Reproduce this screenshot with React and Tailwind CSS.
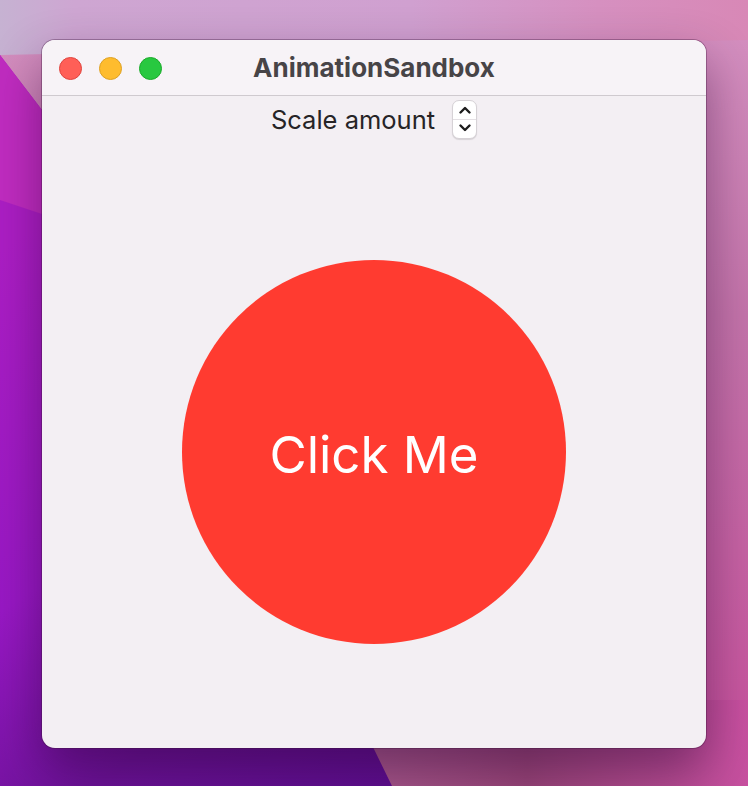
import React from 'react';

const Wallpaper = () => (
  <svg className="absolute inset-0" width="748" height="786" viewBox="0 0 748 786">
    <defs>
      <linearGradient id="pink" x1="0" y1="0" x2="0" y2="786" gradientUnits="userSpaceOnUse">
        <stop offset="0" stopColor="#d692c2" />
        <stop offset="0.4" stopColor="#c474aa" />
        <stop offset="1" stopColor="#c8509c" />
      </linearGradient>
      <linearGradient id="top" x1="0" y1="0" x2="748" y2="0" gradientUnits="userSpaceOnUse">
        <stop offset="0" stopColor="#c6b2d2" />
        <stop offset="0.1" stopColor="#cea6d2" />
        <stop offset="0.55" stopColor="#d0a0d0" />
        <stop offset="0.8" stopColor="#d690c0" />
        <stop offset="1" stopColor="#d888b6" />
      </linearGradient>
      <linearGradient id="purple" x1="0" y1="250" x2="380" y2="786" gradientUnits="userSpaceOnUse">
        <stop offset="0" stopColor="#ac1ec4" />
        <stop offset="0.45" stopColor="#9818c4" />
        <stop offset="0.75" stopColor="#6c1298" />
        <stop offset="1" stopColor="#5e0e90" />
      </linearGradient>
      <linearGradient id="mauve" x1="380" y1="0" x2="748" y2="0" gradientUnits="userSpaceOnUse">
        <stop offset="0" stopColor="#a8588a" />
        <stop offset="0.4" stopColor="#9a4678" />
        <stop offset="1" stopColor="#c850a0" />
      </linearGradient>
    </defs>
    <rect width="748" height="786" fill="url(#pink)" />
    <rect x="372" y="700" width="376" height="86" fill="url(#mauve)" />
    <polygon points="0,55 42,110 200,320 372,745 392,786 0,786" fill="url(#purple)" />
    <polygon points="0,55 42,110 150,250 0,200" fill="#c02cc0" />
    <polygon points="0,0 748,0 748,40 0,55" fill="url(#top)" />
  </svg>
);

const Stepper = () => (
  <div className="flex h-[39px] w-[25px] flex-col rounded-[7px] border border-[#d6d2d6] bg-white shadow-[0_1px_1px_rgba(0,0,0,0.12)]">
    <div className="flex flex-1 items-center justify-center border-b border-[#e4e0e4] pt-[1px]">
      <svg width="14" height="10" viewBox="0 0 14 10" fill="none">
        <path d="M2.5 7.5 L7 3 L11.5 7.5" stroke="#1c1c1c" strokeWidth="2.4" strokeLinecap="round" strokeLinejoin="round" />
      </svg>
    </div>
    <div className="flex flex-1 items-center justify-center pb-[1px]">
      <svg width="14" height="10" viewBox="0 0 14 10" fill="none">
        <path d="M2.5 2.5 L7 7 L11.5 2.5" stroke="#1c1c1c" strokeWidth="2.4" strokeLinecap="round" strokeLinejoin="round" />
      </svg>
    </div>
  </div>
);

export default function App() {
  return (
    <div
      className="relative h-[786px] w-[748px] overflow-hidden"
      style={{ fontFamily: 'Inter, "Liberation Sans", sans-serif' }}
    >
      <Wallpaper />
      <div className="relative pl-[42px] pt-[40px]">
        <div className="flex h-[708px] w-[664px] flex-col overflow-hidden rounded-[13px] bg-[#f3eff3] shadow-[0_0_0_1px_rgba(60,20,60,0.35),0_22px_50px_rgba(40,0,50,0.45)]">
          <div className="relative flex h-[56px] shrink-0 items-center border-b border-[#cfcacf] bg-[#f7f3f7] px-[16px]">
            <div className="flex items-center gap-[17px] pl-[1px] pt-[1px]">
              <span className="h-[23px] w-[23px] rounded-full border border-[#e0443e] bg-[#ff5f57]" />
              <span className="h-[23px] w-[23px] rounded-full border border-[#dea123] bg-[#febc2e]" />
              <span className="h-[23px] w-[23px] rounded-full border border-[#1aab29] bg-[#28c840]" />
            </div>
            <div className="absolute inset-0 flex items-center justify-center text-[26px] font-bold text-[#474447]">
              AnimationSandbox
            </div>
          </div>

          <div className="flex flex-col items-center">
            <div className="mt-[3px] flex items-center gap-[17px]">
              <span className="pt-[2px] text-[25.5px] text-[#262426]">Scale amount</span>
              <Stepper />
            </div>
            <button className="mt-[121px] flex h-[384px] w-[384px] items-center justify-center rounded-full bg-[#ff3b30] text-[51px] text-white">
              <span className="mt-[6px]">Click Me</span>
            </button>
          </div>
        </div>
      </div>
    </div>
  );
}
